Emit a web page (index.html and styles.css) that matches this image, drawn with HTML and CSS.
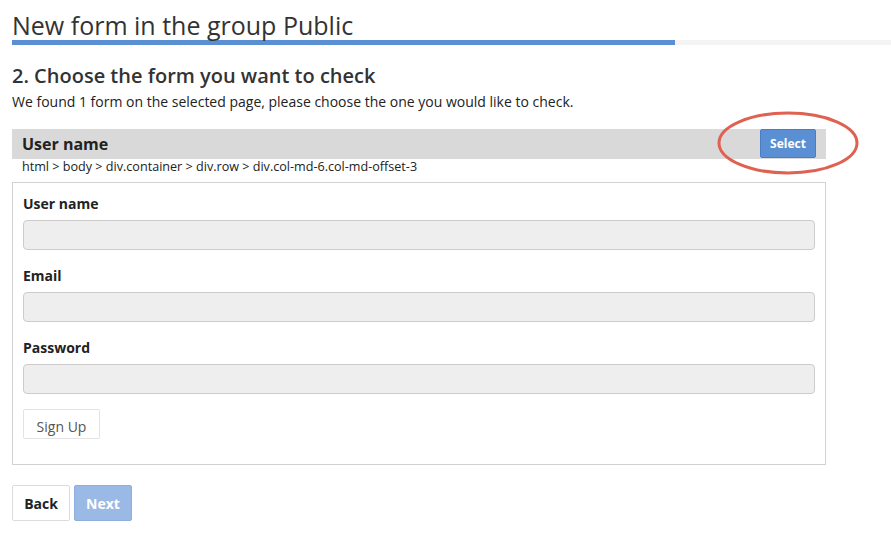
FILE: index.html
```html
<!DOCTYPE html>
<html>
<head>
<meta charset="utf-8">
<link rel="stylesheet" href="styles.css">
</head>
<body>
<header class="page-head">
  <h1 class="title">New form in the group Public</h1>
  <div class="progress"><div class="progress-fill" style="width: 663px"></div></div>
</header>
<main class="content">
  <h2 class="step">2. Choose the form you want to check</h2>
  <p class="lead">We found 1 form on the selected page, please choose the one you would like to check.</p>

  <div class="form-bar">
    <span class="form-name">User name</span>
    <button class="btn-select">Select</button>
    <svg class="mark" width="146" height="68" viewBox="0 0 146 68"><ellipse cx="73" cy="34" rx="69" ry="30" fill="none" stroke="#df6151" stroke-width="3"/></svg>
  </div>
  <div class="crumb">html &gt; body &gt; div.container &gt; div.row &gt; div.col-md-6.col-md-offset-3</div>

  <div class="preview">
    <div class="group">
      <label class="lbl">User name</label>
      <div class="input"></div>
    </div>
    <div class="group">
      <label class="lbl">Email</label>
      <div class="input"></div>
    </div>
    <div class="group">
      <label class="lbl">Password</label>
      <div class="input"></div>
    </div>
    <button class="btn-signup">Sign Up</button>
  </div>

  <div class="actions">
    <button class="btn-back">Back</button>
    <button class="btn-next">Next</button>
  </div>
</main>
</body>
</html>
```
FILE: styles.css
```css
* { box-sizing: border-box; }
html, body { margin: 0; padding: 0; background: #fff; }
body {
  font-family: "Open Sans", "Noto Sans", sans-serif;
  color: #333;
  width: 891px;
}
.page-head { padding-left: 12px; padding-top: 11px; }
.title {
  margin: 0;
  font-size: 25px;
  font-weight: 400;
  line-height: 29px;
  color: #333;
}
.progress {
  height: 5px;
  background: #f4f4f4;
}
.progress-fill { height: 5px; background: #5b8fd4; }
.content { padding-left: 12px; width: 826px; }
.step {
  margin: 17px 0 0;
  font-size: 20px;
  font-weight: 600;
  line-height: 28px;
  color: #333;
}
.lead {
  margin: 2px 0 0;
  font-size: 14px;
  line-height: 20px;
  color: #222;
}
.form-bar {
  position: relative;
  margin-top: 17px;
  height: 30px;
  background: #d9d9d9;
  display: flex;
  align-items: center;
  justify-content: space-between;
  padding: 0 10px;
}
.form-name { font-size: 16px; font-weight: 700; color: #222; }
.btn-select {
  height: 29px;
  width: 56px;
  margin-top: -1px;
  border: 1px solid #4a7dc6;
  border-radius: 2px;
  background: #5b8fd4;
  color: #fff;
  font-family: inherit;
  font-size: 12px;
  font-weight: 700;
  padding: 0;
}
.mark { position: absolute; right: -35px; top: -20px; }
.crumb {
  padding-left: 10px;
  font-size: 12.6px;
  line-height: 16px;
  color: #222;
  margin-bottom: 7px;
}
.preview {
  border: 1px solid #d2d2d2;
  padding: 11px 10px 25px;
}
.group { margin-bottom: 16px; }
.lbl {
  display: block;
  font-size: 14px;
  font-weight: 700;
  line-height: 20px;
  color: #222;
  margin-bottom: 6px;
}
.input {
  height: 30px;
  background: #eee;
  border: 1px solid #ccc;
  border-radius: 4px;
}
.btn-signup {
  display: block;
  margin-top: -1px;
  height: 30px;
  width: 77px;
  background: #fff;
  border: 1px solid #e3e3e3;
  border-radius: 2px;
  color: #555;
  font-family: inherit;
  font-size: 14px;
  padding: 4px 0 0;
}
.actions { margin-top: 20px; display: flex; gap: 4px; }
.btn-back, .btn-next {
  height: 36px;
  width: 58px;
  border-radius: 2px;
  font-family: inherit;
  font-size: 14px;
  font-weight: 700;
  padding: 0;
}
.btn-back { background: #fff; border: 1px solid #dcdcdc; color: #222; }
.btn-next { background: #9bb9e5; border: 1px solid #8cafe0; color: #fff; }
```
